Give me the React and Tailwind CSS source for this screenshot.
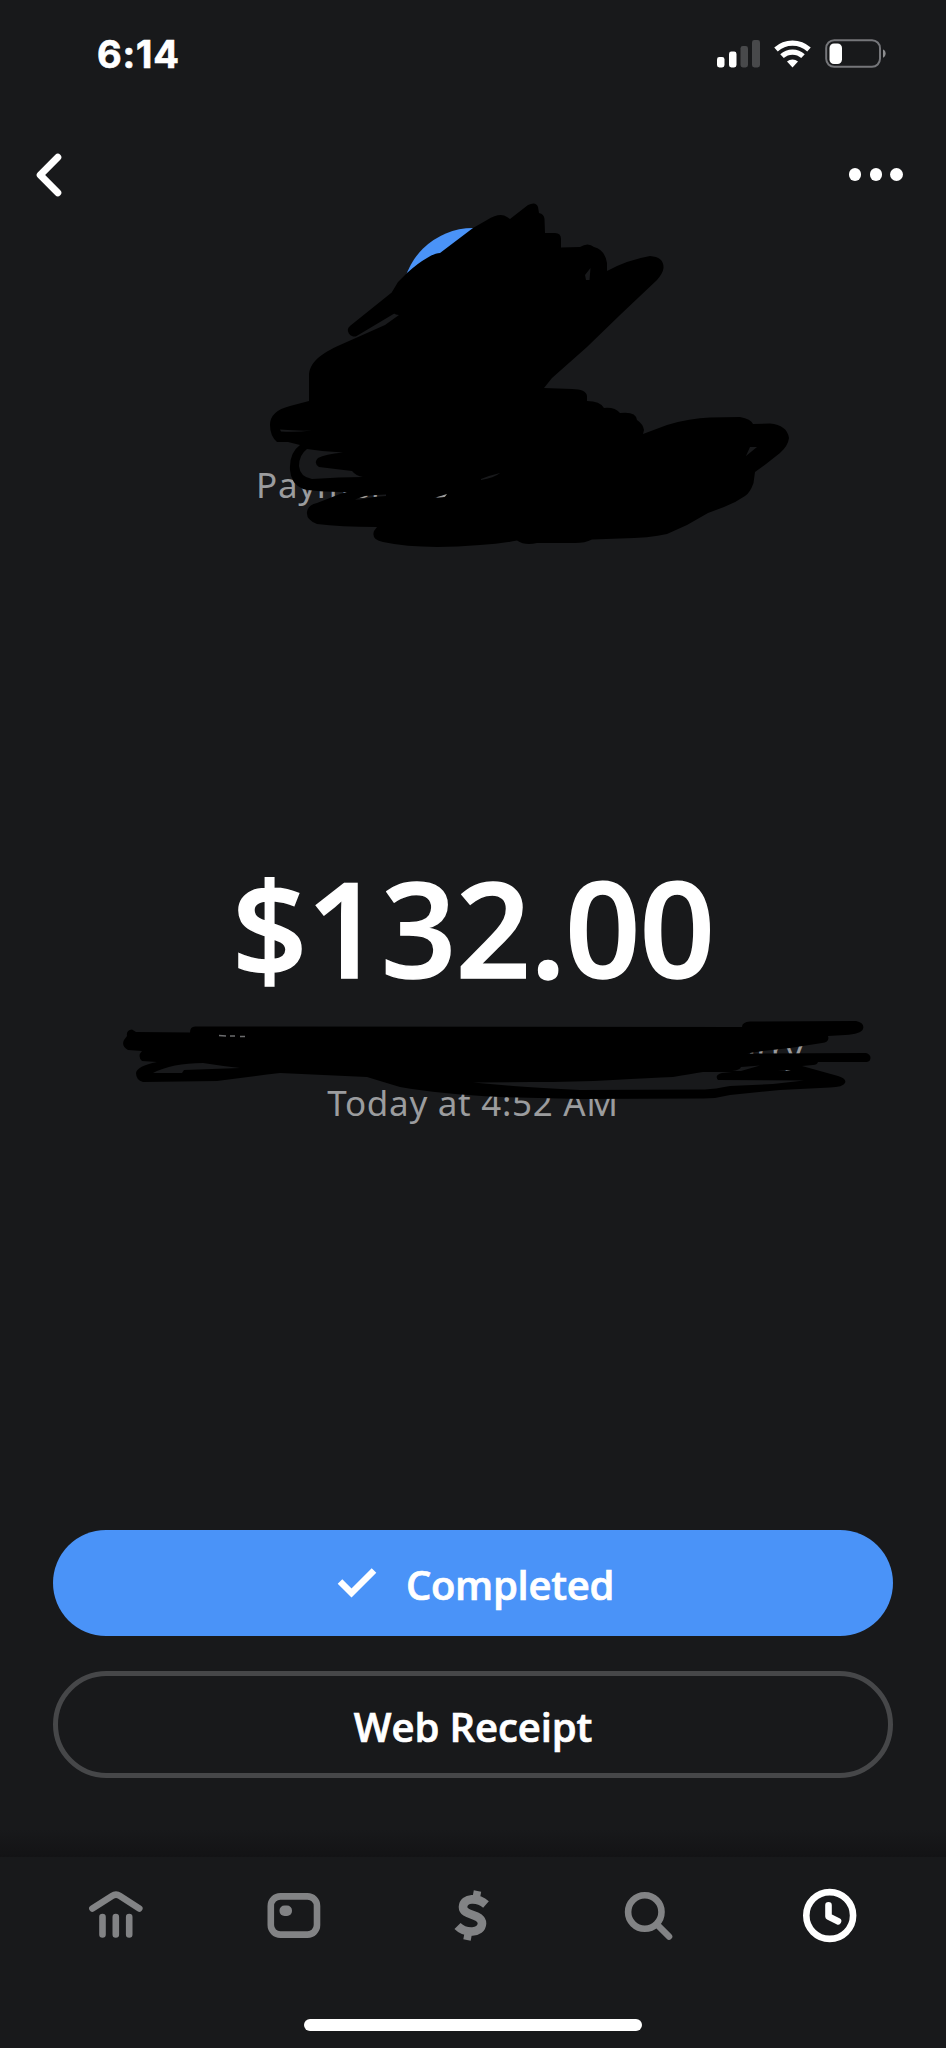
// src/App.jsx
// Payment receipt screen: status bar, amount, actions and bottom tab bar.
import React from 'react';

// ── Status bar ───────────────────────────────────────────────────────────────
function StatusBar() {
  return (
    <div className="flex h-[107px] items-center justify-between pr-[60px] pl-[97px]">
      <span className="pt-px font-['Inter',sans-serif] text-[38px] leading-none font-bold tracking-[0.8px] [-webkit-text-stroke:0.7px_white]">6:14</span>
      <svg className="h-[30px] w-[170px]" viewBox="716 39 170 30">
        <rect x="717" y="57" width="7.5" height="10.5" rx="2.4" fill="#fff" />
        <rect x="729" y="51.5" width="7.5" height="16" rx="2.4" fill="#fff" />
        <rect x="740.5" y="46" width="7.5" height="21.5" rx="2.4" fill="#48494b" />
        <rect x="752" y="40" width="8" height="27.5" rx="2.4" fill="#48494b" />
        <path d="M776 49.5A24.5 24.5 0 0 1 809 49.5" fill="none" stroke="#fff" strokeWidth="5.2" />
        <path d="M782 56.2A15.5 15.5 0 0 1 803 56.2" fill="none" stroke="#fff" strokeWidth="5.2" />
        <path d="M792.5 67.5L787 61.6A8 8 0 0 1 798 61.6Z" fill="#fff" />
        <rect x="826.2" y="40.2" width="53.8" height="26.6" rx="8" fill="none" stroke="#75767a" strokeWidth="2" />
        <rect x="829.5" y="43.5" width="12.5" height="20.5" rx="4.5" fill="#fff" />
        <path d="M883 49.5C886.5 50.5 886.5 56.5 883 57.8Z" fill="#8c8d8f" />
      </svg>
    </div>
  );
}

function TopNav() {
  return (
    <div className="flex h-[135px] items-center justify-between pr-[43.5px] pl-[36px]">
      <svg className="h-[44px] w-[26px]" viewBox="0 0 26 44" fill="none" stroke="#fff" strokeWidth="7" strokeLinecap="round" strokeLinejoin="round">
        <path d="M21.8 4.3L4.2 22L21.8 39.7" />
      </svg>
      <div className="flex gap-[8.5px]">
        <span className="size-[12.2px] rounded-full bg-white" />
        <span className="size-[12.2px] rounded-full bg-white" />
        <span className="size-[12.2px] rounded-full bg-white" />
      </div>
    </div>
  );
}

// ── Marker strokes drawn over the recipient and the note ─────────────────────
function Scribbles() {
  return (
    <svg className="pointer-events-none absolute top-0 left-0 h-[1200px] w-[946px]" viewBox="0 0 946 1200" fill="#000" fillRule="evenodd">
      <path d="M354 330.500L402 292L400 303Z" stroke="#000" strokeWidth="12" strokeLinecap="round" strokeLinejoin="round" />
      <path
        d="M309 376C309 362 322 353 340 345L385 325L399 315Q392 315 391 307L392 292L398 282L407 273Q418 263 427 258Q435 253 440 253L473 228L487 220Q500 212 507 217L510 219L528 205Q536 201 538 207L539 213Q544 214 544.500 219L545 233L555 233Q561 233 561 239L561 247.500L580 247Q588 242 594 247Q605 250 607 263L607 271Q627 260 650 256Q664 257 663.500 268Q663 273 657 280L620 315L587 347L552 378L544 388L572 389Q586 389 587 396L587 401Q600 401 604 408Q615 407 620 413Q636 411 637 420Q643 424 644 430L643 434L667 425Q690 418 710 417.500L740 417Q751 419 753 424L770 423.500Q787 425 789 438Q788 446 780 453L766 464L755 472L753.500 483Q750 493 745 496Q735 503 724 507L708 513L687 525L667 534Q650 538 620 538.500L592 539.500Q585 543 575 543L537 543Q525 546 517 540.500Q500 544 480 545Q420 550 383 542Q371 540 374 531L377 527Q340 527 317 524Q306 520 307 512Q308 505 317 503L340 494L347 492Q315 492 303 489Q291 484 290 470Q289 453 300 445L288 442L277 442Q270 436 270 425Q270 411 290 406L309 401Z
        M307 449Q325 452 343 452.500Q325 454 318 458Q313 463 319 467L352 471Q356 476 363 477Q340 477 312 479Q300 477 299 466Q299 455 307 449Z
        M280 429.500Q296 431 312 430.500Q296 432.500 281 431.500Z
        M585 275L590.500 268L589.500 280H586Z
        M746 456L750 447L757 447Z
        M481 479Q491 475 500 473Q494 478 481 480Z
        M355 499.500L365 496L376 495L386 494.500L386 496L374 497L360 499.500Z
        M434 498L447 494L445 497Z"
      />
      <path
        d="M127 1036Q126 1030 132 1029.500L136 1032L190 1032.500Q190 1026 196 1026.500L742 1027Q742 1022 750 1021.500L856 1021Q865 1023 863 1029Q861 1034 845 1035L828 1036Q830 1042 822 1043L790 1048L763 1051L747 1053.500L866 1053Q872 1055 870 1060Q869 1062 865 1062L818 1062Q817 1065 813 1065L802 1066L838 1076Q847 1079 845 1083Q843 1087 830 1087.500L780 1090L730 1095Q715 1099 700 1098.500L580 1099L500 1097Q440 1094 400 1087Q380 1081 367 1077L280 1073Q247 1077 217 1081L143 1082Q136 1080 136 1073Q137 1066 157 1062L142 1061Q137 1056 142 1051L128 1050Q121 1046 124 1040Z
        M153 1073Q172 1063 203 1063Q222 1066 240 1068L184 1070L182 1073Z
        M473 1082.500L530 1082Q575 1082 613 1080Q650 1078 673 1077Q691 1074 703 1072L732 1072L722 1073Q714 1075 718 1080L804 1080.500L773 1084L730 1086Q715 1089 705 1089.500L580 1090Q540 1088 513 1086Z
        M732 1071Q740 1070 741 1067L760 1065.500L741 1071Z
        M778 1070.500L786 1070L791 1071Z"
      />
      <path d="M219 1035.500L226 1036M230 1036H235M240 1036.500H245" stroke="#6b6c6e" strokeWidth="1.3" />
    </svg>
  );
}

// ── Tab bar icons ────────────────────────────────────────────────────────────
const TABS = [
  {
    label: 'Banking',
    className: 'text-[#828385]',
    icon: (
      <>
        <path d="M92.400 1908.500L112 1896Q116 1893.400 120 1896L139.300 1908.500" />
        <path d="M102.500 1917V1934.500M115.800 1917V1934.500M129.200 1917V1934.500" />
      </>
    ),
    viewBox: '86 1884 60 60',
  },
  {
    label: 'Card',
    className: 'text-[#828385]',
    icon: (
      <>
        <rect x="271.300" y="1896.400" width="46.200" height="38.200" rx="9.500" />
        <rect x="280" y="1905.500" width="12.500" height="10.500" rx="5" fill="currentColor" stroke="none" />
      </>
    ),
    viewBox: '265.5 1884 60 60',
  },
  {
    label: 'Pay',
    className: 'text-[#828385]',
    icon: (
      <>
        <path d="M486 1904.500C478 1897.500 463.500 1897 463 1907C463 1916.500 482 1913 482 1923.500C481.500 1934 465 1933.500 457.500 1926" strokeWidth="8.600" strokeLinecap="butt" />
        <path d="M477.500 1891L476 1899M468.500 1932L467 1940" strokeWidth="7.500" strokeLinecap="butt" />
      </>
    ),
    viewBox: '443 1884 60 60',
  },
  {
    label: 'Search',
    className: 'text-[#828385]',
    icon: (
      <>
        <circle cx="644.300" cy="1912" r="16.700" />
        <path d="M656.500 1924.500L668.500 1936.500" />
      </>
    ),
    viewBox: '621.5 1884 60 60',
  },
  {
    label: 'Activity',
    className: 'text-white',
    icon: (
      <>
        <circle cx="829.700" cy="1915.500" r="23.400" />
        <path d="M828.500 1905.300V1916.500L838 1921.300" />
      </>
    ),
    viewBox: '800 1884 60 60',
  },
];

function TabBar() {
  return (
    <nav className="flex h-[191px] flex-col items-center bg-[#18191b]">
      <div className="flex h-[114px] w-full items-center justify-between px-[86px]">
        {TABS.map(tab => (
          <button key={tab.label} aria-label={tab.label} className={tab.className}>
            <svg className="size-[60px]" viewBox={tab.viewBox} fill="none" stroke="currentColor" strokeWidth="6.600" strokeLinecap="round" strokeLinejoin="round">
              {tab.icon}
            </svg>
          </button>
        ))}
      </div>
      <div className="mt-[48px] h-[12px] w-[338px] rounded-full bg-white" />
    </nav>
  );
}

export default function App() {
  return (
    <div className="relative flex h-[2048px] w-[946px] flex-col overflow-hidden bg-[#18191b] font-['Noto_Sans',sans-serif] text-white">
      <StatusBar />
      <TopNav />

      {/* Recipient */}
      <header className="-mt-[14px] flex h-[615px] flex-col items-center">
        <div className="size-[142px] rounded-full bg-[#4a93f8]" />
        <p className="mt-[91px] w-[434px] text-[35px] leading-[48px] tracking-[0.7px] whitespace-nowrap text-[#9b9c9e]">Payment to</p>
      </header>

      {/* Amount and date */}
      <main className="flex flex-1 flex-col items-center">
        <h1 className="font-['Open_Sans',sans-serif] text-[132px] leading-[168px] font-semibold tracking-[-1px] [-webkit-text-stroke:1.5px_white]">$132.00</h1>
        <p className="mt-[12px] w-full pr-[143px] text-right text-[35px] leading-[53px] text-[#9b9c9e]">urry</p>
        <p className="text-[35px] leading-[53px] tracking-[0.7px] text-[#9b9c9e]">Today at 4:52 AM</p>
      </main>

      {/* Actions */}
      <div className="flex flex-col gap-[35px] px-[53px] pb-[52px] font-['Open_Sans',sans-serif] text-[40px] font-semibold">
        <button className="flex h-[106px] items-center justify-center gap-[29px] rounded-full bg-[#4a93f8] pl-[5px]">
          <svg className="h-[30px] w-[40px]" viewBox="0 0 40 30" fill="none" stroke="#fff" strokeWidth="6.500">
            <path d="M3 13.500L14.500 25L37 2.500" />
          </svg>
          <span className="pt-[4px] tracking-[-0.3px] [-webkit-text-stroke:0.7px_white]">Completed</span>
        </button>
        <button className="h-[107px] rounded-full border-[5px] border-[#464749] pt-[4px] tracking-[-0.1px] [-webkit-text-stroke:0.7px_white]">Web Receipt</button>
      </div>
      <div className="h-[27px] bg-linear-to-b from-[#18191b] to-[#131315]" />

      <TabBar />
      <Scribbles />
    </div>
  );
}
